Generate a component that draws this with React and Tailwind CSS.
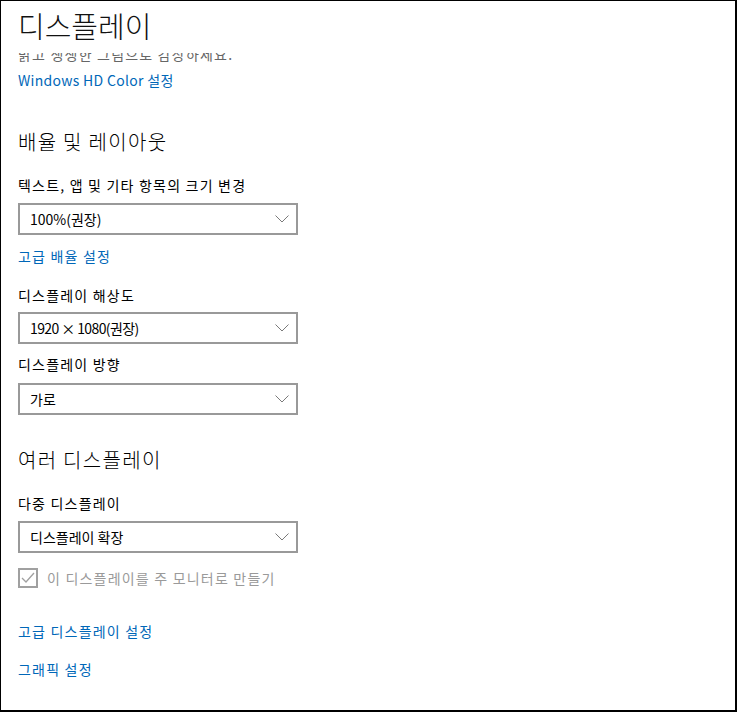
import React from 'react';

const font = { fontFamily: '"Noto Sans CJK KR", "Noto Sans", sans-serif' };

function Chevron() {
  return (
    <svg width="14" height="8" viewBox="0 0 14 8" className="shrink-0">
      <path d="M0.5 0.5 L7 7 L13.5 0.5" fill="none" stroke="#7a7a7a" strokeWidth="1" />
    </svg>
  );
}

function Select({ value, className = '', valueClass = '' }) {
  return (
    <div
      className={`w-[280px] h-[32px] border-2 border-[#999999] flex items-center justify-between pl-[10px] pr-[7px] text-[14px] text-black ${className}`}
    >
      <span className={`leading-[20px] ${valueClass}`}>{value}</span>
      <Chevron />
    </div>
  );
}

function Label({ children, className = '' }) {
  return (
    <div className={`text-[14px] leading-[20px] tracking-[1.2px] text-black ${className}`}>{children}</div>
  );
}

function Link({ children, className = '' }) {
  return (
    <div className={`text-[14px] leading-[20px] text-[#0067b8] ${className}`}>
      <a href="#">{children}</a>
    </div>
  );
}

export default function App() {
  return (
    <div
      className="w-[737px] h-[712px] bg-white border-l border-t border-r-2 border-b-2 border-black overflow-hidden"
      style={font}
    >
      <div className="pl-[17px]">
        <div className="relative z-10 bg-white h-[52px] pt-[4px]">
          <h1 className="text-[29px] leading-[40px] font-light text-[#111111]">디스플레이</h1>
        </div>
        <div className="-mt-[9px] text-[14px] leading-[20px] tracking-[1.2px] text-[#666666]">
          밝고 생생한 그림으로 감상하세요.
        </div>

        <Link className="mt-[6px] tracking-[0.3px]">Windows HD Color 설정</Link>

        <h2 className="mt-[38px] text-[20px] leading-[28px] tracking-[1.3px] font-light text-black">배율 및 레이아웃</h2>

        <Label className="mt-[19px]">텍스트, 앱 및 기타 항목의 크기 변경</Label>
        <Select className="mt-[8px]" value="100%(권장)" />
        <Link className="mt-[11px] tracking-[1.2px]">고급 배율 설정</Link>

        <Label className="mt-[19px]">디스플레이 해상도</Label>
        <Select className="mt-[7px]" value="1920 × 1080(권장)" valueClass="tracking-[-0.6px]" />

        <Label className="mt-[10px]">디스플레이 방향</Label>
        <Select className="mt-[9px]" value="가로" />

        <h2 className="mt-[31px] text-[20px] leading-[28px] tracking-[1.3px] font-light text-black">여러 디스플레이</h2>

        <Label className="mt-[19px]">다중 디스플레이</Label>
        <Select className="mt-[8px]" value="디스플레이 확장" />

        <div className="mt-[15px] flex items-center gap-[9px] h-[20px]">
          <div className="w-[20px] h-[20px] border-2 border-[#a0a0a0] flex items-center justify-center">
            <svg width="14" height="12" viewBox="0 0 14 12">
              <path d="M1 6 L5 10 L13 1" fill="none" stroke="#a0a0a0" strokeWidth="1.3" />
            </svg>
          </div>
          <span className="text-[14px] leading-[20px] tracking-[1.2px] text-[#9a9a9a]">
            이 디스플레이를 주 모니터로 만들기
          </span>
        </div>

        <Link className="mt-[33px] tracking-[1.2px]">고급 디스플레이 설정</Link>
        <Link className="mt-[18px] tracking-[1.2px]">그래픽 설정</Link>
      </div>
    </div>
  );
}
